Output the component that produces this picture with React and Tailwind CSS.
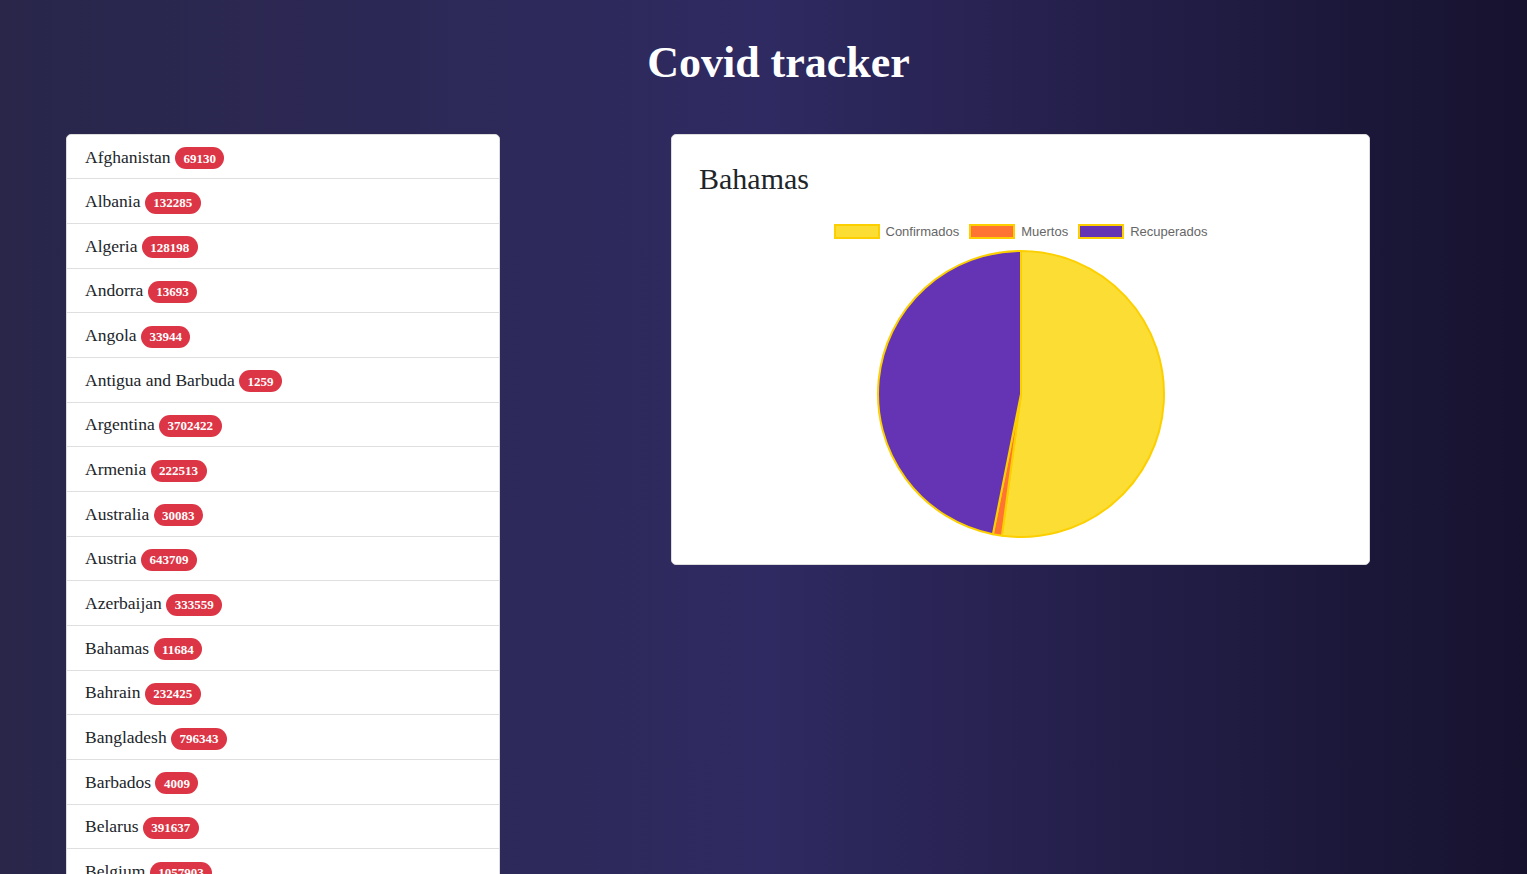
import React from 'react';

const countries = [
    { name: 'Afghanistan', cases: 69130 },
    { name: 'Albania', cases: 132285 },
    { name: 'Algeria', cases: 128198 },
    { name: 'Andorra', cases: 13693 },
    { name: 'Angola', cases: 33944 },
    { name: 'Antigua and Barbuda', cases: 1259 },
    { name: 'Argentina', cases: 3702422 },
    { name: 'Armenia', cases: 222513 },
    { name: 'Australia', cases: 30083 },
    { name: 'Austria', cases: 643709 },
    { name: 'Azerbaijan', cases: 333559 },
    { name: 'Bahamas', cases: 11684 },
    { name: 'Bahrain', cases: 232425 },
    { name: 'Bangladesh', cases: 796343 },
    { name: 'Barbados', cases: 4009 },
    { name: 'Belarus', cases: 391637 },
    { name: 'Belgium', cases: 1057903 },
    { name: 'Belize', cases: 12658 },
    { name: 'Benin', cases: 7884 },
];

const slices = [
    { label: 'Confirmados', value: 11684, fill: '#fcdd33' },
    { label: 'Muertos', value: 229, fill: '#ff7433' },
    { label: 'Recuperados', value: 10500, fill: '#6534b4' },
];

const arcPath = (cx, cy, r, a0, a1) => {
    const p = (a) => [cx + r * Math.sin(a), cy - r * Math.cos(a)];
    const [x0, y0] = p(a0);
    const [x1, y1] = p(a1);
    const large = a1 - a0 > Math.PI ? 1 : 0;
    return `M ${cx} ${cy} L ${x0} ${y0} A ${r} ${r} 0 ${large} 1 ${x1} ${y1} Z`;
};

const PieChart = () => {
    const total = slices.reduce((s, d) => s + d.value, 0);
    let angle = 0;
    return (
        <svg width="290" height="290" viewBox="0 0 290 290">
            {slices.map((s) => {
                const a0 = angle;
                const a1 = angle + (s.value / total) * Math.PI * 2;
                angle = a1;
                return (
                    <path
                        key={s.label}
                        d={arcPath(145, 145, 143, a0, a1)}
                        fill={s.fill}
                        stroke="#fcd000"
                        strokeWidth="2"
                        strokeLinejoin="round"
                    />
                );
            })}
        </svg>
    );
};

const App = () => {
    return (
        <div
            className="min-h-screen w-full bg-gradient-to-r from-[#29264a] via-[#2f2a61] to-[#16122e] pt-[37px]"
            style={{ fontFamily: '"Liberation Serif", "Times New Roman", serif' }}
        >
            <h1 className="text-center text-white font-bold text-[44px] leading-[1.2] pl-[30px]">Covid tracker</h1>

            <div className="flex items-start gap-[171px] pl-[66px] mt-[44px]">
                {/* Country list */}
                <ul className="w-[434px] shrink-0 bg-white rounded-[5px] border border-[#dcdcdc] overflow-hidden">
                    {countries.map((c, i) => (
                        <li
                            key={c.name}
                            className={`h-[44.66px] flex items-center px-[18px] text-[17.5px] text-[#212529] ${i < countries.length - 1 ? 'border-b border-[#dfdfdf]' : ''}`}
                        >
                            <span>
                                {c.name}{' '}
                                <span className="inline-block align-baseline bg-[#dc3545] text-white font-bold text-[13px] leading-none px-[8.5px] py-[4.5px] rounded-full">
                                    {c.cases}
                                </span>
                            </span>
                        </li>
                    ))}
                </ul>

                {/* Chart card */}
                <div className="w-[699px] shrink-0 bg-white rounded-[5px] border border-[#dcdcdc] px-[27px] pt-[26px] pb-[25px]">
                    <h2 className="text-[30px] leading-[36px] text-[#212529]">Bahamas</h2>
                    <div className="mt-[25px] flex justify-center items-center gap-[10px] text-[13px] text-[#666666]" style={{ fontFamily: '"Liberation Sans", Arial, sans-serif' }}>
                        {slices.map((s) => (
                            <div key={s.label} className="flex items-center gap-[6px]">
                                <span className="w-[46px] h-[15px] border-2 border-[#fcd000]" style={{ backgroundColor: s.fill }} />
                                <span>{s.label}</span>
                            </div>
                        ))}
                    </div>
                    <div className="mt-[8px] flex justify-center">
                        <PieChart />
                    </div>
                </div>
            </div>
        </div>
    );
};

export default App;
